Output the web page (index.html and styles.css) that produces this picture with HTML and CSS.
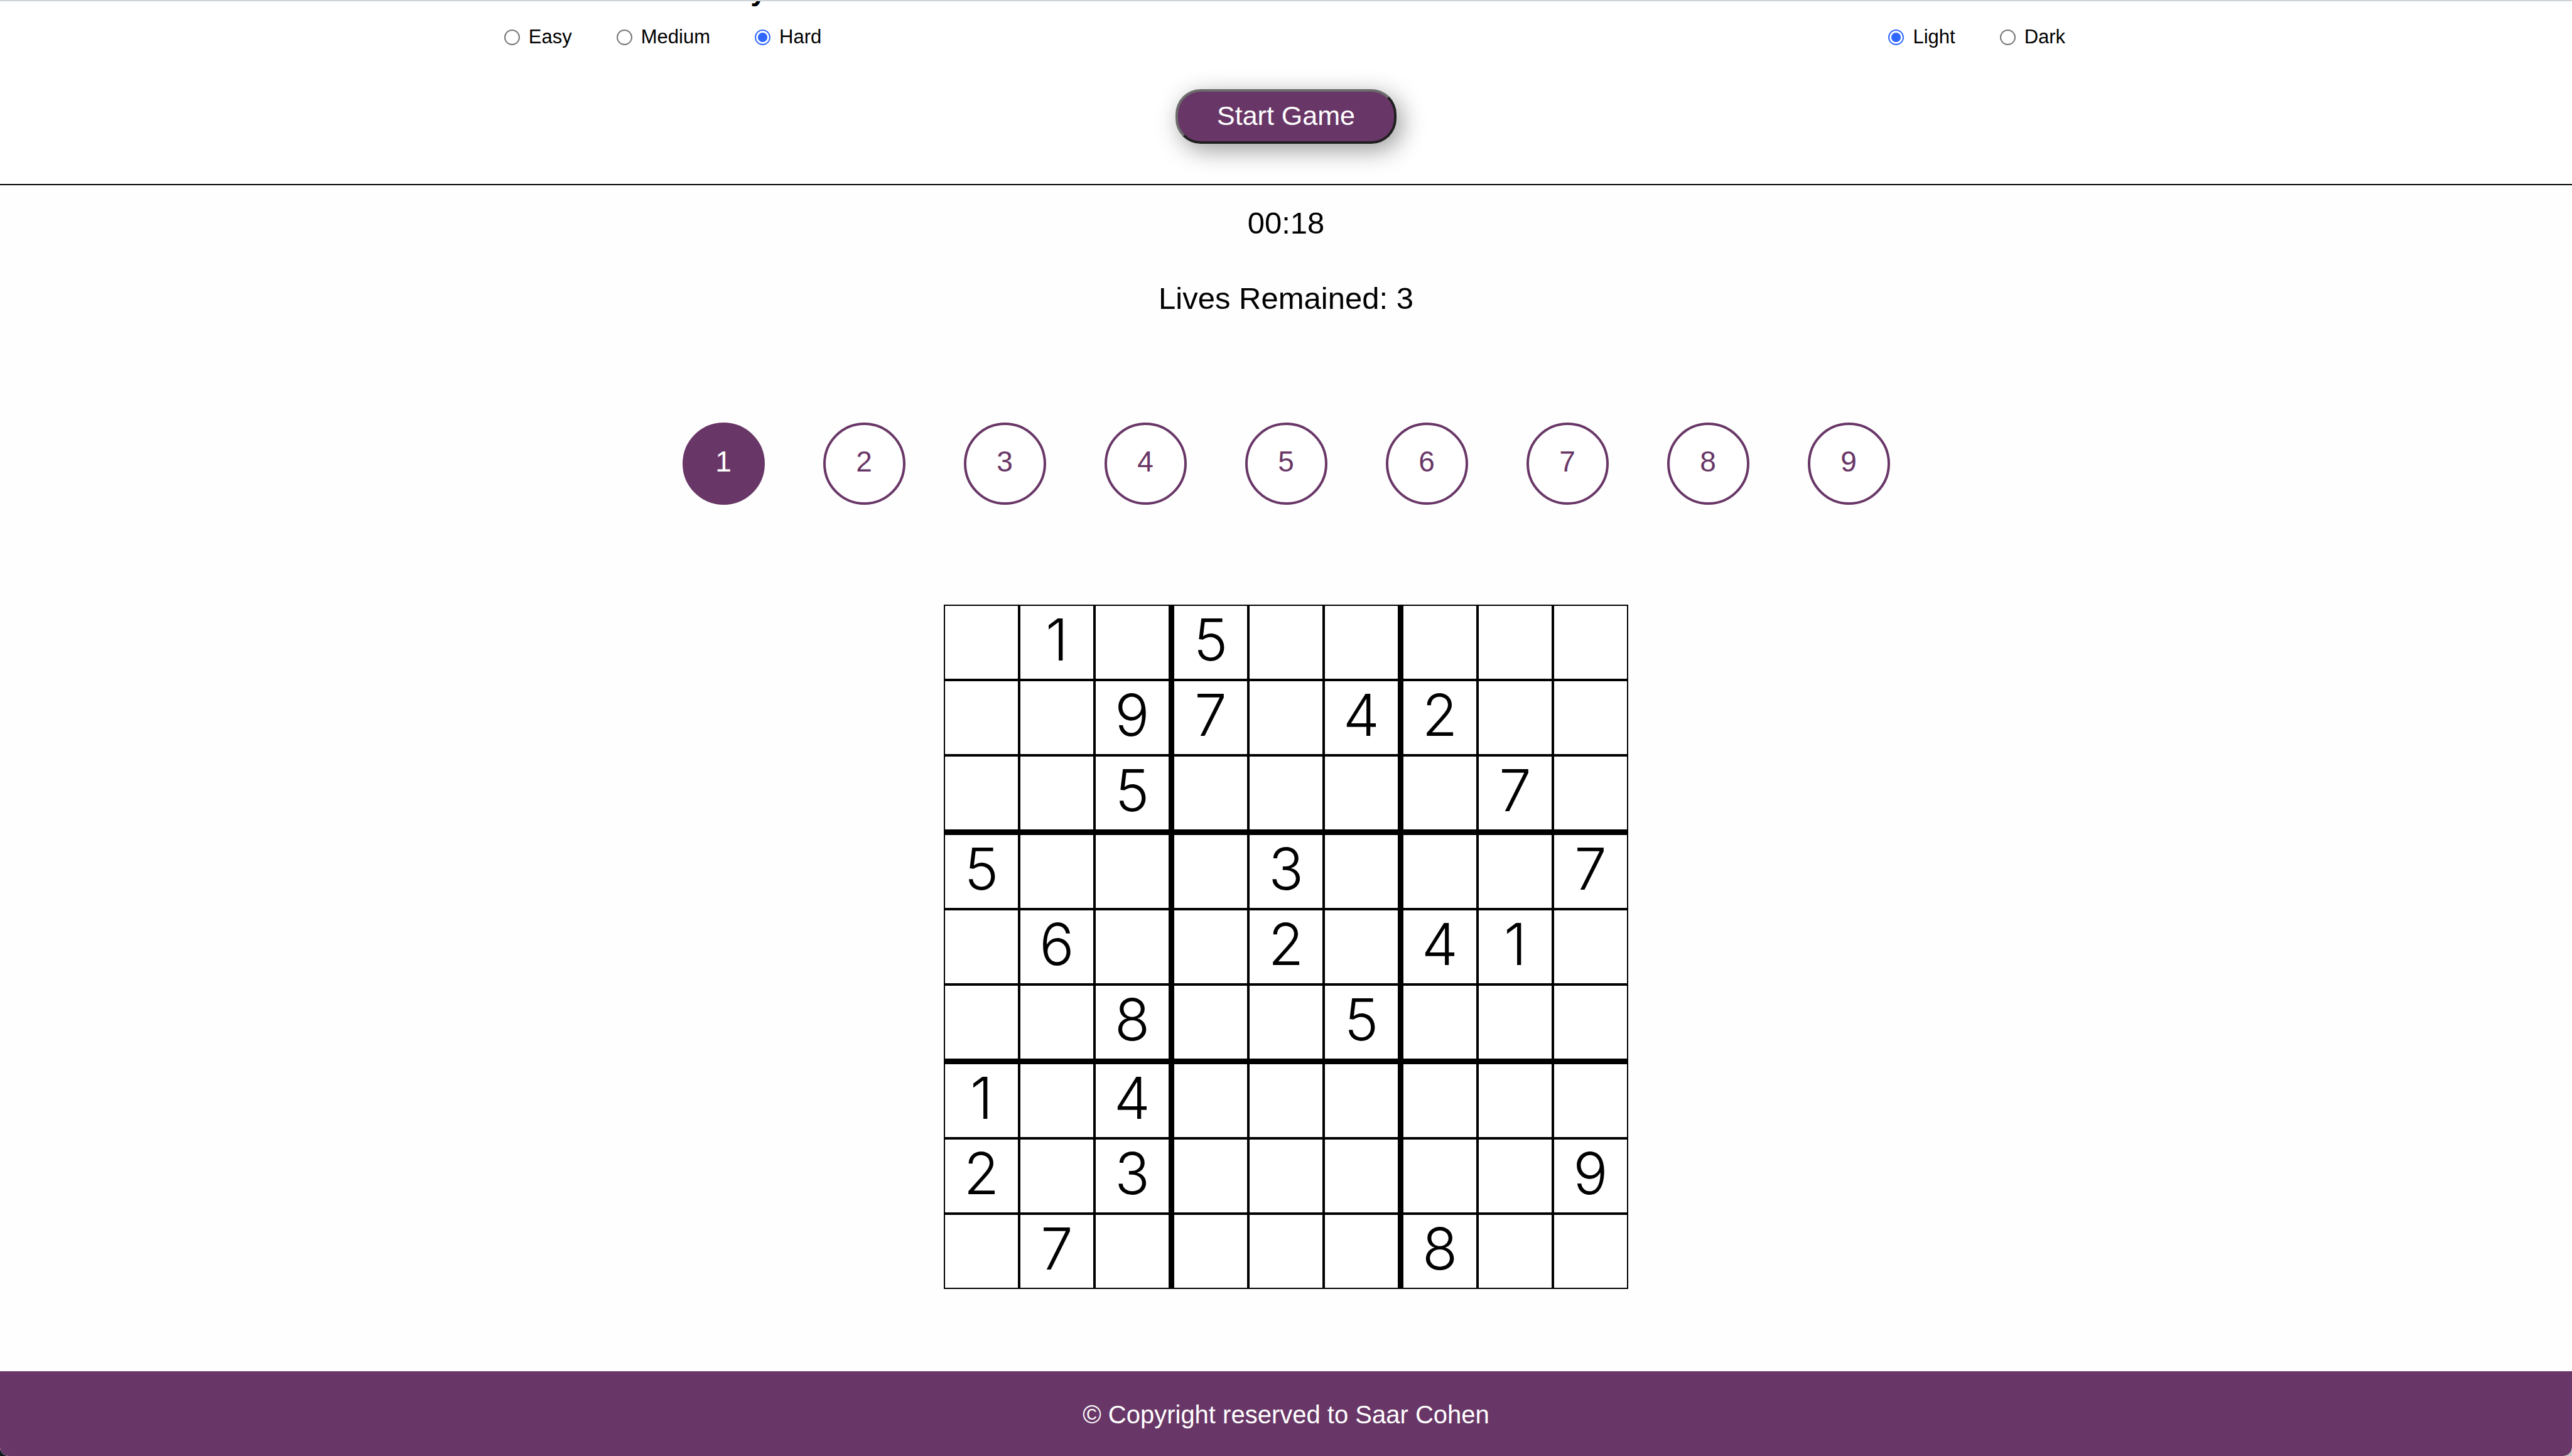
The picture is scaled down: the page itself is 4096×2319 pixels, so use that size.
FILE: index.html
```html
<!DOCTYPE html>
<html lang="en">
<head>
<meta charset="utf-8">
<title>Sudoku</title>
<link rel="stylesheet" href="styles.css">
</head>
<body>
<header class="settings">
  <h2 class="settings-title">Difficulty</h2>
  <form class="options">
    <div class="option-group">
      <label class="option"><input type="radio" name="level">Easy</label>
      <label class="option"><input type="radio" name="level">Medium</label>
      <label class="option"><input type="radio" name="level" checked>Hard</label>
    </div>
    <div class="option-group">
      <label class="option"><input type="radio" name="theme" checked>Light</label>
      <label class="option"><input type="radio" name="theme">Dark</label>
    </div>
  </form>
  <button class="start" type="button">Start Game</button>
</header>
<main class="game">
  <p class="status">00:18</p>
  <p class="status">Lives Remained: 3</p>
  <div class="numbers">
    <button class="number selected" type="button">1</button>
    <button class="number" type="button">2</button>
    <button class="number" type="button">3</button>
    <button class="number" type="button">4</button>
    <button class="number" type="button">5</button>
    <button class="number" type="button">6</button>
    <button class="number" type="button">7</button>
    <button class="number" type="button">8</button>
    <button class="number" type="button">9</button>
  </div>
  <table class="board">
    <tr><td></td><td>1</td><td></td><td>5</td><td></td><td></td><td></td><td></td><td></td></tr>
    <tr><td></td><td></td><td>9</td><td>7</td><td></td><td>4</td><td>2</td><td></td><td></td></tr>
    <tr><td></td><td></td><td>5</td><td></td><td></td><td></td><td></td><td>7</td><td></td></tr>
    <tr><td>5</td><td></td><td></td><td></td><td>3</td><td></td><td></td><td></td><td>7</td></tr>
    <tr><td></td><td>6</td><td></td><td></td><td>2</td><td></td><td>4</td><td>1</td><td></td></tr>
    <tr><td></td><td></td><td>8</td><td></td><td></td><td>5</td><td></td><td></td><td></td></tr>
    <tr><td>1</td><td></td><td>4</td><td></td><td></td><td></td><td></td><td></td><td></td></tr>
    <tr><td>2</td><td></td><td>3</td><td></td><td></td><td></td><td></td><td></td><td>9</td></tr>
    <tr><td></td><td>7</td><td></td><td></td><td></td><td></td><td>8</td><td></td><td></td></tr>
  </table>
</main>
<footer class="footer">© Copyright reserved to Saar Cohen</footer>
</body>
</html>
```
FILE: styles.css
```css
:root {
  --purple: #693767;
}

* {
  box-sizing: border-box;
}

/* Shows only behind the rounded bottom corners of the page */
html {
  background: linear-gradient(90deg, #10181f 50%, #c4c4c4 50%);
}

body {
  margin: 0;
  min-height: 100vh;
  display: flex;
  flex-direction: column;
  border-radius: 0 0 14px 14px;
  background: #fff;
  color: #000;
  font-family: "Liberation Sans", Arial, sans-serif;
}

.settings {
  display: flex;
  flex-direction: column;
  align-items: center;
  border-top: 2px solid #ced3d7;
  border-bottom: 2px solid #000;
  padding-bottom: 64px;
  overflow: hidden;
}

.settings-title {
  align-self: flex-start;
  margin: -42px 0 0 25%;
  font-size: 46px;
  line-height: 48px;
  font-weight: 700;
}

.options {
  align-self: stretch;
  display: flex;
  justify-content: space-between;
  padding: 30px 19.7% 0 19.6%;
}

.option-group {
  display: flex;
  gap: 71px;
}

.option {
  display: flex;
  align-items: center;
  gap: 14px;
  font-size: 31px;
  line-height: 42px;
}

.option input {
  appearance: none;
  width: 25px;
  height: 25px;
  margin: 0;
  border: 2px solid #767676;
  border-radius: 50%;
  background: #fff;
}

.option input:checked {
  border-color: #3068ff;
  background: radial-gradient(circle, #3068ff 7px, #fff 8px);
}

.start {
  margin-top: 62px;
  width: 352px;
  height: 87px;
  padding: 0 0 2px;
  border: 4px solid;
  border-color: #6c6c6c #1f1f1f #1f1f1f #6c6c6c;
  border-radius: 40px;
  background: var(--purple);
  color: #fff;
  font: 43px "Liberation Sans", Arial, sans-serif;
  box-shadow: 8px 10px 38px rgba(0, 0, 0, 0.4);
}

.game {
  flex: 1;
  display: flex;
  flex-direction: column;
  align-items: center;
  padding-top: 32px;
  background: #fefefe;
}

.status {
  margin: 0 0 64px;
  font-size: 49px;
  line-height: 56px;
}

.numbers {
  display: flex;
  gap: 93px;
  margin-top: 106px;
}

.number {
  width: 131px;
  height: 131px;
  padding: 0 0 8px;
  border: 4px solid var(--purple);
  border-radius: 50%;
  background: #fff;
  color: var(--purple);
  font: 46px "Liberation Sans", Arial, sans-serif;
}

.number.selected {
  background: var(--purple);
  color: #fff;
}

.board {
  margin-top: 159px;
  border-spacing: 0;
}

.board td {
  box-sizing: content-box;
  width: 116px;
  height: 108px;
  padding: 0 0 8px;
  border: 2px solid #000;
  background: #fff;
  text-align: center;
  vertical-align: middle;
  font: 340 92px/108px Inter, sans-serif;
}

.board td:nth-child(3),
.board td:nth-child(6) {
  border-right-width: 7px;
}

.board tr:nth-child(3) td,
.board tr:nth-child(6) td {
  border-bottom-width: 7px;
}

.footer {
  padding: 46px 0 43px;
  border-radius: 0 0 14px 14px;
  background: var(--purple);
  color: #fff;
  text-align: center;
  font-size: 40px;
  line-height: 46px;
}
```
